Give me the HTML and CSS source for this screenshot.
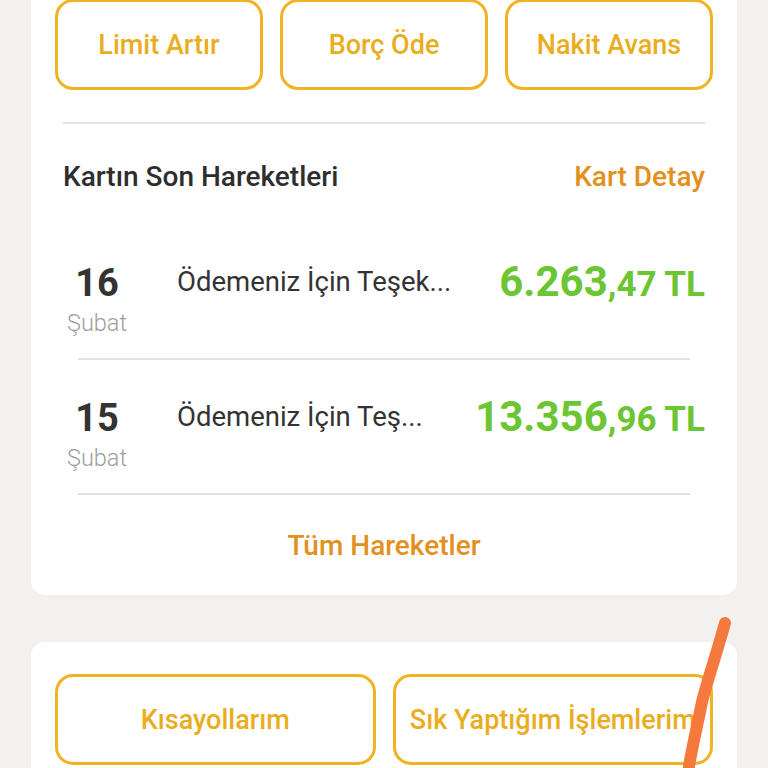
FILE: index.html
```html
<!DOCTYPE html>
<html lang="tr">
	<head>
		<meta charset="UTF-8" />
		<meta name="viewport" content="width=device-width, initial-scale=1.0" />
		<title>Kart</title>
		<link rel="stylesheet" href="styles.css">
	</head>
	<body>
		<div class="page">
			<div class="card card-top">
				<div class="actions">
					<a class="btn">Limit Artır</a>
					<a class="btn">Borç Öde</a>
					<a class="btn">Nakit Avans</a>
				</div>

				<div class="section">
					<div class="head">
						<span class="head-title">Kartın Son Hareketleri</span>
						<a class="link">Kart Detay</a>
					</div>

					<ul class="moves">
						<li class="move">
							<div class="date">
								<span class="day">16</span>
								<span class="month">Şubat</span>
							</div>
							<span class="desc">Ödemeniz İçin Teşek...</span>
							<span class="amount">6.263<small>,47 TL</small></span>
						</li>
						<li class="move">
							<div class="date">
								<span class="day">15</span>
								<span class="month">Şubat</span>
							</div>
							<span class="desc">Ödemeniz İçin Teş...</span>
							<span class="amount">13.356<small>,96 TL</small></span>
						</li>
					</ul>

					<a class="link all">Tüm Hareketler</a>
				</div>
			</div>

			<div class="card card-bottom">
				<div class="actions two">
					<a class="btn">Kısayollarım</a>
					<a class="btn">Sık Yaptığım İşlemlerim</a>
				</div>
			</div>
		</div>

		<!-- el ile çizilmiş işaret -->
		<svg class="mark" width="60" height="160" viewBox="0 0 60 160">
			<path d="M42 11 C34 40 24 70 19 90 C14 115 8 140 5 160" fill="none" stroke="#f5793d" stroke-width="12" stroke-linecap="round" />
		</svg>
	</body>
</html>
```

FILE: styles.css
```css
body,
ul {
	margin: 0;
	padding: 0;
	list-style: none;
}
body {
	background: #f2f1ef;
	font-family: Roboto, "Noto Sans", sans-serif;
	color: #333;
	overflow: hidden;
	height: 768px;
	position: relative;
}
.page {
	padding: 0 31px;
}
.card {
	background: #fff;
	border-radius: 14px;
	padding: 0 24px;
}
.card-top {
	margin-top: -20px;
	padding-top: 19px;
	padding-bottom: 33px;
}
.card-bottom {
	margin-top: 47px;
	padding-top: 32px;
	padding-bottom: 40px;
}
.actions {
	display: grid;
	grid-template-columns: repeat(3, 1fr);
	gap: 17px;
}
.actions.two {
	grid-template-columns: 1fr 1fr;
}
.btn {
	box-sizing: border-box;
	height: 91px;
	border: 3px solid #f1b324;
	border-radius: 18px;
	display: flex;
	align-items: center;
	justify-content: center;
	color: #ebad20;
	font-size: 27px;
	font-weight: 500;
	white-space: nowrap;
	overflow: hidden;
}
.section {
	margin: 32px 8px 0;
	border-top: 2px solid #e2e2e2;
	padding-top: 36px;
}
.head {
	display: flex;
	justify-content: space-between;
	align-items: center;
	height: 32px;
}
.head-title {
	font-size: 28px;
	font-weight: 500;
	color: #2e2e2e;
}
.link {
	font-size: 28px;
	font-weight: 500;
	color: #e3901c;
}
.moves {
	margin-top: 33px;
}
.move {
	display: flex;
	align-items: flex-start;
	padding: 38px 0 21px;
	margin: 0 15px;
	border-bottom: 2px solid #e2e2e2;
}
.date {
	width: 62px;
	margin-left: -12px;
	display: flex;
	flex-direction: column;
	align-items: center;
}
.day {
	font-size: 38px;
	font-weight: 700;
	line-height: 40px;
	color: #333;
}
.month {
	font-size: 23.5px;
	font-weight: 300;
	color: #9e9e9e;
	line-height: 28px;
	margin-top: 6px;
}
.desc {
	font-size: 27.5px;
	line-height: 38px;
	margin-left: 49px;
	flex: 1;
	white-space: nowrap;
	color: #333;
}
.amount {
	font-size: 42px;
	font-weight: 700;
	line-height: 38px;
	color: #6cc533;
	margin-right: -15px;
	white-space: nowrap;
}
.amount small {
	font-size: 35px;
}
.all {
	display: block;
	text-align: center;
	margin-top: 35px;
	line-height: 32px;
}
.mark {
	position: absolute;
	left: 683px;
	top: 612px;
}
```
